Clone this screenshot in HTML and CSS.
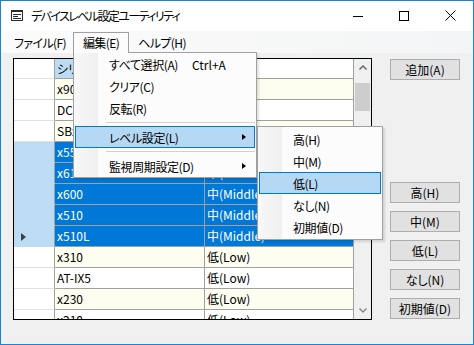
FILE: index.html
```html
<!DOCTYPE html>
<html lang="ja">
<head>
    <meta charset="UTF-8">
    <title>デバイスレベル設定ユーティリティ</title>
    <link rel="stylesheet" href="styles.css">
</head>
<body>
<div class="window">
    <div class="titlebar">
        <svg class="app-icon" width="12" height="11" viewBox="0 0 12 11">
            <rect x="0.5" y="0.5" width="11" height="10" fill="none" stroke="#2b2b2b"/>
            <rect x="0" y="0" width="12" height="2" fill="#2b2b2b"/>
            <rect x="2" y="4" width="8" height="1" fill="#2b2b2b"/>
            <rect x="2" y="6" width="5" height="1" fill="#2b2b2b"/>
            <rect x="2" y="8" width="8" height="1" fill="#2b2b2b"/>
        </svg>
        <span class="title">デバイスレベル設定ユーティリティ</span>
        <div class="caption">
            <span class="cap-btn">
                <svg width="10" height="10" viewBox="0 0 10 10"><line x1="0" y1="5.5" x2="10" y2="5.5" stroke="#000"/></svg>
            </span>
            <span class="cap-btn">
                <svg width="10" height="10" viewBox="0 0 10 10"><rect x="0.5" y="0.5" width="9" height="9" fill="none" stroke="#000"/></svg>
            </span>
            <span class="cap-btn">
                <svg width="11" height="11" viewBox="0 0 11 11"><path d="M0.5 0.5 L10.5 10.5 M10.5 0.5 L0.5 10.5" stroke="#000" fill="none"/></svg>
            </span>
        </div>
    </div>

    <div class="menubar">
        <span class="top-item item-file">ファイル(F)</span>
        <span class="top-item item-edit open">編集(E)</span>
        <span class="top-item item-help">ヘルプ(H)</span>
    </div>

    <div class="client">
        <div class="main-row">
            <div class="grid">
                <div class="grid-body">
                    <div class="row head">
                        <div class="rh"></div>
                        <div class="cell c1">シリーズ名</div>
                        <div class="cell c2">レベル</div>
                    </div>
                    <div class="row alt">
                        <div class="rh"></div>
                        <div class="cell c1">x900</div>
                        <div class="cell c2"></div>
                    </div>
                    <div class="row">
                        <div class="rh"></div>
                        <div class="cell c1">DC2552XS</div>
                        <div class="cell c2"></div>
                    </div>
                    <div class="row alt">
                        <div class="rh"></div>
                        <div class="cell c1">SBx908</div>
                        <div class="cell c2"></div>
                    </div>
                    <div class="row sel">
                        <div class="rh"></div>
                        <div class="cell c1">x550</div>
                        <div class="cell c2">中(Middle)</div>
                    </div>
                    <div class="row sel alt">
                        <div class="rh"></div>
                        <div class="cell c1">x610</div>
                        <div class="cell c2">中(Middle)</div>
                    </div>
                    <div class="row sel">
                        <div class="rh"></div>
                        <div class="cell c1">x600</div>
                        <div class="cell c2">中(Middle)</div>
                    </div>
                    <div class="row sel alt">
                        <div class="rh"></div>
                        <div class="cell c1">x510</div>
                        <div class="cell c2">中(Middle)</div>
                    </div>
                    <div class="row sel">
                        <div class="rh current"><span class="row-arrow"></span></div>
                        <div class="cell c1">x510L</div>
                        <div class="cell c2">中(Middle)</div>
                    </div>
                    <div class="row alt">
                        <div class="rh"></div>
                        <div class="cell c1">x310</div>
                        <div class="cell c2">低(Low)</div>
                    </div>
                    <div class="row">
                        <div class="rh"></div>
                        <div class="cell c1">AT-IX5</div>
                        <div class="cell c2">低(Low)</div>
                    </div>
                    <div class="row alt">
                        <div class="rh"></div>
                        <div class="cell c1">x230</div>
                        <div class="cell c2">低(Low)</div>
                    </div>
                    <div class="row">
                        <div class="rh"></div>
                        <div class="cell c1">x210</div>
                        <div class="cell c2">低(Low)</div>
                    </div>
                </div>
                <div class="vscroll">
                    <span class="arrow-btn">
                        <svg width="8" height="5" viewBox="0 0 8 5"><path d="M0.5 4.5 L4 1 L7.5 4.5" stroke="#606060" stroke-width="1.4" fill="none"/></svg>
                    </span>
                    <span class="thumb"></span>
                    <span class="arrow-btn bottom">
                        <svg width="8" height="5" viewBox="0 0 8 5"><path d="M0.5 0.5 L4 4 L7.5 0.5" stroke="#858585" stroke-width="1.4" fill="none"/></svg>
                    </span>
                </div>
            </div>

            <div class="side">
                <button class="btn">追加(A)</button>
                <div class="level-buttons">
                    <button class="btn">高(H)</button>
                    <button class="btn">中(M)</button>
                    <button class="btn">低(L)</button>
                    <button class="btn">なし(N)</button>
                    <button class="btn">初期値(D)</button>
                </div>
            </div>
        </div>
    </div>

    <!-- 編集 menu dropdown -->
    <div class="menu edit-menu">
        <div class="menu-item"><span class="label wide">すべて選択(A)</span><span class="shortcut">Ctrl+A</span></div>
        <div class="menu-item">クリア(C)</div>
        <div class="menu-item">反転(R)</div>
        <div class="menu-sep"></div>
        <div class="menu-item hot">レベル設定(L)<span class="sub-arrow"></span></div>
        <div class="menu-sep"></div>
        <div class="menu-item">監視周期設定(D)<span class="sub-arrow"></span></div>
    </div>

    <!-- レベル設定 submenu -->
    <div class="menu level-menu">
        <div class="menu-item">高(H)</div>
        <div class="menu-item">中(M)</div>
        <div class="menu-item hot">低(L)</div>
        <div class="menu-item">なし(N)</div>
        <div class="menu-item">初期値(D)</div>
    </div>
</div>
</body>
</html>
```

FILE: styles.css
```css
* {
    margin: 0;
    padding: 0;
    box-sizing: border-box;
}
body {
    font-family: "Noto Sans CJK JP", "Noto Sans", sans-serif;
    font-size: 12px;
    color: #000;
    background: #fff;
    font-feature-settings: "palt";
}
.window {
    position: relative;
    width: 474px;
    height: 345px;
    border: 1px solid #1883d7;
    display: flex;
    flex-direction: column;
    background: #f0f0f0;
    overflow: hidden;
}

/* title bar */
.titlebar {
    height: 30px;
    background: #fff;
    display: flex;
    align-items: center;
    padding-left: 10px;
}
.app-icon {
    display: block;
    margin-top: -1px;
}
.title {
    margin-left: 8px;
    line-height: 16px;
    letter-spacing: -1.6px;
}
.caption {
    margin-left: auto;
    display: flex;
    height: 30px;
}
.cap-btn {
    width: 46px;
    height: 30px;
    display: flex;
    align-items: center;
    justify-content: center;
    padding-bottom: 1px;
}
.cap-btn svg {
    display: block;
}

/* menu bar */
.menubar {
    height: 22px;
    display: flex;
    padding: 1px 0 0 6px;
    background: linear-gradient(to right, #fbfbfb, #f4f5f6);
}
.top-item {
    height: 21px;
    line-height: 19px;
    text-align: center;
    border: 1px solid transparent;
    border-bottom: none;
    letter-spacing: -0.6px;
}
.item-file { width: 66px; }
.item-edit { width: 56px; }
.item-help { width: 66px; }
.top-item.open {
    position: relative;
    z-index: 3;
    border-color: #a0a0a0;
    background: #fcfcfc;
}

/* client area */
.client {
    flex: 1;
    padding: 5px 0 0 12px;
}
.main-row {
    display: flex;
    gap: 18px;
}

/* data grid */
.grid {
    width: 359px;
    height: 262px;
    border: 1px solid #000;
    background: #fff;
    display: flex;
}
.grid-body {
    width: 340px;
    overflow: hidden;
}
.row {
    display: flex;
    height: 21px;
}
.row.head {
    height: 20px;
}
.rh {
    width: 41px;
    border-right: 1px solid #a0a0a0;
    border-bottom: 1px solid #e3e3e3;
    background: #fff;
    display: flex;
    align-items: center;
    padding-left: 7px;
}
.cell {
    border-right: 1px solid #a0a0a0;
    border-bottom: 1px solid #a0a0a0;
    padding-left: 2px;
    line-height: 20px;
    white-space: nowrap;
    overflow: hidden;
    background: #fff;
}
.head .cell {
    line-height: 19px;
}
.c1 { width: 150px; }
.c2 { width: 149px; }
.head .c1 {
    background: #bcdcf4;
}
.row.alt .cell {
    background: #fdfdf0;
}
.row.sel .rh {
    background: #bcdcf4;
    border-bottom-color: #bcdcf4;
}
.row.sel .cell {
    background: #0078d7;
    color: #fff;
}
.row-arrow {
    width: 0;
    height: 0;
    border-left: 5px solid #404040;
    border-top: 4.5px solid transparent;
    border-bottom: 4.5px solid transparent;
    margin-top: 2px;
}

/* scrollbar */
.vscroll {
    width: 17px;
    background: #f0f0f0;
    display: flex;
    flex-direction: column;
    align-items: center;
}
.arrow-btn {
    height: 17px;
    width: 17px;
    display: flex;
    align-items: center;
    justify-content: center;
}
.arrow-btn svg {
    display: block;
}
.arrow-btn.bottom {
    margin-top: auto;
    padding-bottom: 1px;
}
.thumb {
    margin-top: 7px;
    width: 15px;
    height: 28px;
    background: #cdcdcd;
}

/* buttons on the right */
.side {
    display: flex;
    flex-direction: column;
    justify-content: space-between;
    padding: 1px 0 1px;
}
.level-buttons {
    display: flex;
    flex-direction: column;
    gap: 8px;
}
.btn {
    width: 70px;
    height: 21px;
    background: #e1e1e1;
    border: 1px solid #adadad;
    font: inherit;
    font-feature-settings: "palt";
    color: #000;
    line-height: 18px;
}

/* dropdown menus */
.menu {
    position: absolute;
    border: 1px solid #a0a0a0;
    box-shadow: 2px 2px 2px rgba(0, 0, 0, 0.12);
    background: linear-gradient(to right, #f8f8f8 0, #efefef 24px, #fcfcfc 24px);
    z-index: 2;
}
.edit-menu {
    left: 72px;
    top: 51px;
    width: 184px;
    height: 126px;
}
.level-menu {
    left: 256px;
    top: 125px;
    width: 126px;
    height: 114px;
    padding: 1px 0;
}
.menu-item {
    height: 22px;
    margin: 0 1px;
    padding-left: 33px;
    border: 1px solid transparent;
    display: flex;
    align-items: center;
    white-space: nowrap;
    letter-spacing: -0.4px;
}
.menu-item.hot {
    background: #b5d8f4;
    border-color: #0078d7;
}
.label.wide {
    width: 83px;
}
.shortcut {
    letter-spacing: 0;
}
.sub-arrow {
    margin-left: auto;
    margin-right: 8px;
    width: 0;
    height: 0;
    border-left: 4px solid #000;
    border-top: 3.5px solid transparent;
    border-bottom: 3.5px solid transparent;
}
.menu-sep {
    height: 7px;
    margin: 0 1px 0 32px;
    padding-top: 3px;
}
.menu-sep::after {
    content: "";
    display: block;
    border-top: 1px solid #d2d2d2;
}
```
